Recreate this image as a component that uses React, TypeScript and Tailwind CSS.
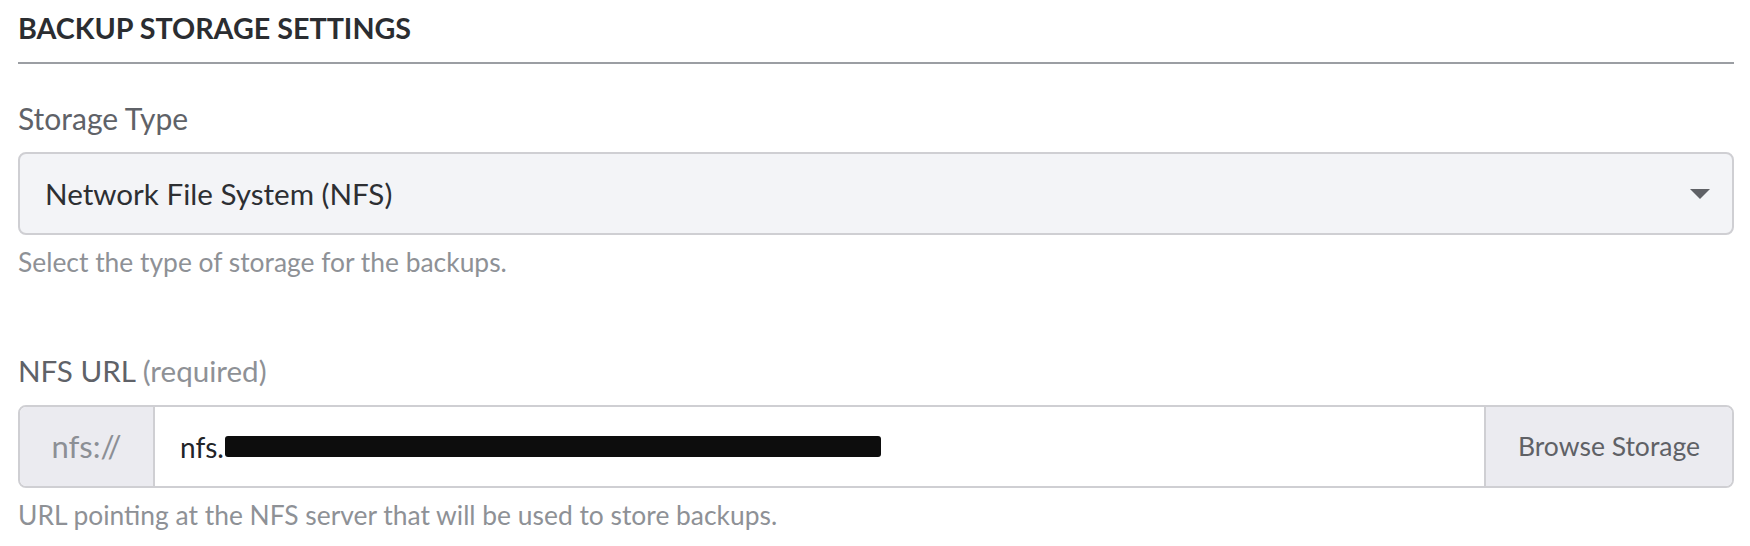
export default function App() {
  return (
    <div className="min-h-screen bg-white pl-[18px] pr-[16px] pt-[11px] font-['Lato',sans-serif]">
      {/* Section title */}
      <h2 className="border-b-2 border-[#9b9ea3] pb-[17px] text-[28.7px] leading-[1.2] font-bold text-[#2b2d31]">
        BACKUP STORAGE SETTINGS
      </h2>

      {/* Storage type select */}
      <div className="mt-[36px]">
        <label className="block text-[30px] leading-[36px] text-[#5f6268]">Storage Type</label>
        <div className="mt-[16px] flex h-[83px] items-center justify-between rounded-[8px] border-2 border-[#cfcfd3] bg-[#f3f4f7] pl-[25px] pr-[22px]">
          <span className="text-[29.6px] text-[#2d2f33]">Network File System (NFS)</span>
          <svg width="20" height="10" viewBox="0 0 20 10" className="fill-[#5f6166]">
            <path d="M0 0 H20 L10 10 Z" />
          </svg>
        </div>
        <p className="mt-[12px] text-[26.4px] leading-[1.2] text-[#8e9196]">
          Select the type of storage for the backups.
        </p>
      </div>

      {/* NFS URL */}
      <div className="mt-[74px]">
        <label className="block text-[29.6px] leading-[36px] text-[#5f6268]">
          NFS URL <span className="text-[#8e9196]">(required)</span>
        </label>
        <div className="mt-[16px] flex h-[83px] overflow-hidden rounded-[8px] border-2 border-[#cfcfd3]">
          <div className="flex w-[135px] items-center justify-center border-r-2 border-[#cfcfd3] bg-[#ebebf0] text-[31px] text-[#8c8f95]">
            nfs://
          </div>
          <div className="flex flex-1 items-center bg-white pl-[25px] text-[28px] text-[#222428]">
            <span>nfs.</span>
            <span className="ml-[1px] h-[21px] w-[656px] rounded-[3px] bg-[#0d0d0d]" />
          </div>
          <div className="flex w-[248px] items-center justify-center border-l-2 border-[#cfcfd3] bg-[#ebebf0] text-[26.5px] text-[#5f6166]">
            Browse Storage
          </div>
        </div>
        <p className="mt-[12px] text-[26.4px] leading-[1.2] text-[#8e9196]">
          URL pointing at the NFS server that will be used to store backups.
        </p>
      </div>
    </div>
  );
}
